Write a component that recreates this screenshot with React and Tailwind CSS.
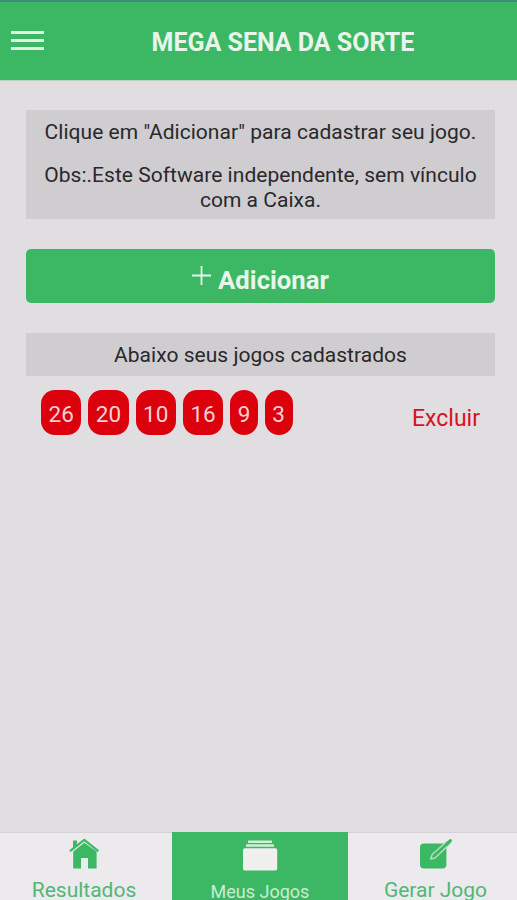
const games = [
    { id: 1, numbers: [26, 20, 10, 16, 9, 3] },
];

const HomeIcon = () => (
    <svg className="h-8 w-[30px] shrink-0" viewBox="0 0 30 32" fill="none">
        <path d="M4 10V2.6H8V6.5Z" fill="#3cb864" />
        <path d="M1 13.2 15.3 1.8 29.4 13.2" stroke="#3cb864" strokeWidth="2.2" />
        <path d="M4.2 13.6 15.3 4.8 27.6 13.6V30.6H19V20H12V30.6H4.2Z" fill="#3cb864" />
    </svg>
);

const AlbumsIcon = () => (
    <svg className="h-8 w-9 shrink-0" viewBox="0 0 36 32" fill="#f0f0ee">
        <rect x="6" y="1.4" width="24" height="2.5" rx="0.6" fill="#d3efd8" />
        <rect x="4" y="5.2" width="28" height="2.6" rx="0.6" fill="#d3efd8" />
        <rect x="1" y="9.2" width="34.2" height="22.3" rx="1.8" />
    </svg>
);

const CreateIcon = () => (
    <svg className="h-8 w-8 shrink-0" viewBox="0 0 32 32" fill="none">
        <rect x="0" y="5.5" width="26.4" height="25" rx="4" fill="#3cb864" />
        <path d="M10.6 21 12.2 16.4 26.4 3.8 29.2 6.6 15 20Z" fill="#3cb864" stroke="#b5e0c0" strokeWidth="1.4" strokeLinejoin="round" />
        <path d="M24.8 5.8 29 1.8Q30.6 0.4 31.6 1.6 32.4 3 31 4.4L26.8 8.2Z" fill="#3cb864" />
    </svg>
);

const App = () => {
    return (
        <div className="flex h-[900px] w-[517px] flex-col overflow-hidden bg-[#e0dee1] font-['Roboto',sans-serif]">
            <header className="flex h-[81px] shrink-0 items-start border-t-2 border-b border-t-[#3f8b79] border-b-[#b9d3c1] bg-[#3cb864]">
                <button className="mt-[29px] ml-[11px] flex w-[33px] flex-col gap-[5px]" aria-label="Menu">
                    <span className="h-[3px] w-full bg-[#e0f2e3]" />
                    <span className="h-[3px] w-full bg-[#e0f2e3]" />
                    <span className="h-[3px] w-full bg-[#e0f2e3]" />
                </button>
                <h1 className="mt-[26px] ml-[107.5px] text-[25px] leading-[30px] font-bold whitespace-nowrap text-[#e8f5ea]">
                    MEGA SENA DA SORTE
                </h1>
            </header>

            <main className="flex min-h-0 flex-1 flex-col pt-[29px] pr-[22px] pl-[26px]">
                <div className="h-[109px] shrink-0 bg-[#cfcdd0] pt-2.5 text-center text-[21px] leading-[25px] tracking-[0.03px] whitespace-nowrap text-[#29282b]">
                    <p>Clique em "Adicionar" para cadastrar seu jogo.</p>
                    <p className="mt-[18px]">
                        Obs:.Este Software independente, sem vínculo
                        <br />
                        com a Caixa.
                    </p>
                </div>

                <button className="mt-[30px] flex h-[54px] shrink-0 items-start justify-center rounded-[5px] bg-[#3cb864] text-[#e8f5ea]">
                    <svg className="mt-[17px] mr-[7px] h-[19px] w-[19px]" viewBox="0 0 19 19" fill="none" stroke="currentColor" strokeWidth="1.8">
                        <path d="M9.5 0V19M0 9.5H19" />
                    </svg>
                    <span className="mt-4 text-[25.7px] leading-[30px] font-bold">Adicionar</span>
                </button>

                <p className="mt-[30px] h-[43px] shrink-0 bg-[#cfcdd0] pt-2.5 text-center text-[21px] leading-[25px] tracking-[0.03px] text-[#29282b]">
                    Abaixo seus jogos cadastrados
                </p>

                {games.map((game) => (
                    <div key={game.id} className="mt-3.5 flex pr-[15px] pl-[15px]">
                        <div className="flex gap-[7px]">
                            {game.numbers.map((number) => (
                                <span
                                    key={number}
                                    className="flex h-[45px] items-center justify-center rounded-[14px] bg-[#dc000c] px-[7.5px] pt-1 text-[22.5px] text-[#f8d0d4]"
                                >
                                    {number}
                                </span>
                            ))}
                        </div>
                        <button className="mt-[13px] ml-auto text-[23px] leading-[26px] text-[#d9101f]">Excluir</button>
                    </div>
                ))}
            </main>

            <nav className="flex h-[68px] shrink-0 bg-[#eceaec] text-[#50b777]">
                <a className="flex w-[172px] flex-col items-center border-t border-[#d5d2d5] pt-[5px] pr-1">
                    <HomeIcon />
                    <span className="mt-2 text-[21px] leading-6">Resultados</span>
                </a>
                <a className="flex w-44 flex-col items-center bg-[#3cb864] pt-[7px] text-[#cdebd2]">
                    <AlbumsIcon />
                    <span className="mt-2.5 text-[18px] leading-[21px]">Meus Jogos</span>
                </a>
                <a className="flex w-[169px] flex-col items-center border-t border-[#d5d2d5] pt-[5px] pl-1.5">
                    <CreateIcon />
                    <span className="mt-2 text-[21px] leading-6">Gerar Jogo</span>
                </a>
            </nav>
        </div>
    );
};

export default App;
